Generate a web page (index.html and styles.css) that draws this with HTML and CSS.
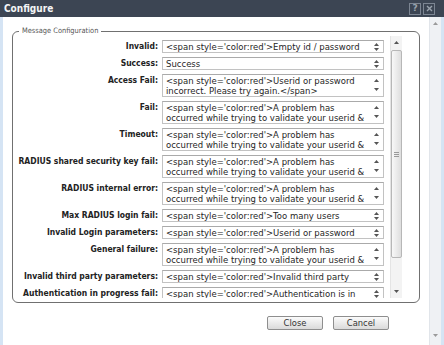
FILE: index.html
```html
<!DOCTYPE html>
<html>
<head>
<meta charset="utf-8">
<link rel="stylesheet" href="styles.css">
</head>
<body>
<div class="window">
  <div class="titlebar">
    <span class="title">Configure</span>
    <div class="tools">
      <span class="tool">?</span>
      <span class="tool"><svg width="7" height="7" viewBox="0 0 7 7"><path d="M1 1L6 6M6 1L1 6" stroke="#9aa3ad" stroke-width="1.4"/></svg></span>
    </div>
  </div>
  <div class="frame">
    <div class="content">
      <fieldset class="group">
        <legend>Message Configuration</legend>
        <div class="scroller">
          <div class="rows">
            <div class="lbl">Invalid:</div>
            <div class="field"><div class="txt">&lt;span style='color:red'&gt;Empty id / password</div><div class="spin"><svg class="ar" viewBox="0 0 5 3"><polygon points="0,3 2.5,0 5,3"/></svg><svg class="ar" viewBox="0 0 5 3"><polygon points="0,0 5,0 2.5,3"/></svg></div></div>

            <div class="lbl">Success:</div>
            <div class="field"><div class="txt">Success</div><div class="spin"><svg class="ar" viewBox="0 0 5 3"><polygon points="0,3 2.5,0 5,3"/></svg><svg class="ar" viewBox="0 0 5 3"><polygon points="0,0 5,0 2.5,3"/></svg></div></div>

            <div class="lbl">Access Fail:</div>
            <div class="field two"><div class="txt"><div>&lt;span style='color:red'&gt;Userid or password</div><div>incorrect. Please try again.&lt;/span&gt;</div></div><div class="spin"><svg class="ar" viewBox="0 0 5 3"><polygon points="0,3 2.5,0 5,3"/></svg><svg class="ar" viewBox="0 0 5 3"><polygon points="0,0 5,0 2.5,3"/></svg></div></div>

            <div class="lbl">Fail:</div>
            <div class="field two"><div class="txt"><div>&lt;span style='color:red'&gt;A problem has</div><div>occurred while trying to validate your userid &amp;</div></div><div class="spin"><svg class="ar" viewBox="0 0 5 3"><polygon points="0,3 2.5,0 5,3"/></svg><svg class="ar" viewBox="0 0 5 3"><polygon points="0,0 5,0 2.5,3"/></svg></div></div>

            <div class="lbl">Timeout:</div>
            <div class="field two"><div class="txt"><div>&lt;span style='color:red'&gt;A problem has</div><div>occurred while trying to validate your userid &amp;</div></div><div class="spin"><svg class="ar" viewBox="0 0 5 3"><polygon points="0,3 2.5,0 5,3"/></svg><svg class="ar" viewBox="0 0 5 3"><polygon points="0,0 5,0 2.5,3"/></svg></div></div>

            <div class="lbl">RADIUS shared security key fail:</div>
            <div class="field two"><div class="txt"><div>&lt;span style='color:red'&gt;A problem has</div><div>occurred while trying to validate your userid &amp;</div></div><div class="spin"><svg class="ar" viewBox="0 0 5 3"><polygon points="0,3 2.5,0 5,3"/></svg><svg class="ar" viewBox="0 0 5 3"><polygon points="0,0 5,0 2.5,3"/></svg></div></div>

            <div class="lbl">RADIUS internal error:</div>
            <div class="field two"><div class="txt"><div>&lt;span style='color:red'&gt;A problem has</div><div>occurred while trying to validate your userid &amp;</div></div><div class="spin"><svg class="ar" viewBox="0 0 5 3"><polygon points="0,3 2.5,0 5,3"/></svg><svg class="ar" viewBox="0 0 5 3"><polygon points="0,0 5,0 2.5,3"/></svg></div></div>

            <div class="lbl">Max RADIUS login fail:</div>
            <div class="field"><div class="txt">&lt;span style='color:red'&gt;Too many users</div><div class="spin"><svg class="ar" viewBox="0 0 5 3"><polygon points="0,3 2.5,0 5,3"/></svg><svg class="ar" viewBox="0 0 5 3"><polygon points="0,0 5,0 2.5,3"/></svg></div></div>

            <div class="lbl">Invalid Login parameters:</div>
            <div class="field"><div class="txt">&lt;span style='color:red'&gt;Userid or password</div><div class="spin"><svg class="ar" viewBox="0 0 5 3"><polygon points="0,3 2.5,0 5,3"/></svg><svg class="ar" viewBox="0 0 5 3"><polygon points="0,0 5,0 2.5,3"/></svg></div></div>

            <div class="lbl">General failure:</div>
            <div class="field two"><div class="txt"><div>&lt;span style='color:red'&gt;A problem has</div><div>occurred while trying to validate your userid &amp;</div></div><div class="spin"><svg class="ar" viewBox="0 0 5 3"><polygon points="0,3 2.5,0 5,3"/></svg><svg class="ar" viewBox="0 0 5 3"><polygon points="0,0 5,0 2.5,3"/></svg></div></div>

            <div class="lbl">Invalid third party parameters:</div>
            <div class="field"><div class="txt">&lt;span style='color:red'&gt;Invalid third party</div><div class="spin"><svg class="ar" viewBox="0 0 5 3"><polygon points="0,3 2.5,0 5,3"/></svg><svg class="ar" viewBox="0 0 5 3"><polygon points="0,0 5,0 2.5,3"/></svg></div></div>

            <div class="lbl">Authentication in progress fail:</div>
            <div class="field"><div class="txt">&lt;span style='color:red'&gt;Authentication is in</div><div class="spin"><svg class="ar" viewBox="0 0 5 3"><polygon points="0,3 2.5,0 5,3"/></svg><svg class="ar" viewBox="0 0 5 3"><polygon points="0,0 5,0 2.5,3"/></svg></div></div>
          </div>
          <div class="vbar">
            <div class="vbtn"><svg class="ar" viewBox="0 0 5 3"><polygon points="0,3 2.5,0 5,3"/></svg></div>
            <div class="thumb"><svg width="5" height="5" viewBox="0 0 5 5"><path d="M0 0.5H5M0 2.5H5M0 4.5H5" stroke="#9a9a9a" stroke-width="1"/></svg></div>
            <div class="track"></div>
            <div class="vbtn"><svg class="ar" viewBox="0 0 5 3"><polygon points="0,0 5,0 2.5,3"/></svg></div>
          </div>
        </div>
      </fieldset>
      <div class="buttons">
        <button class="btn">Close</button>
        <button class="btn">Cancel</button>
      </div>
    </div>
    <div class="outer-bar">
      <svg class="ar light" viewBox="0 0 5 3"><polygon points="0,3 2.5,0 5,3"/></svg>
      <svg class="ar light" viewBox="0 0 5 3"><polygon points="0,0 5,0 2.5,3"/></svg>
    </div>
  </div>
</div>
</body>
</html>
```

FILE: styles.css
```css
html, body {
  margin: 0;
  padding: 0;
}
body {
  width: 444px;
  height: 345px;
  overflow: hidden;
  background: #d5e4f4;
}
.window {
  width: 444px;
  height: 345px;
  display: flex;
  flex-direction: column;
}
.titlebar {
  height: 17px;
  flex: none;
  background: #3c4553;
  display: flex;
  align-items: center;
  justify-content: space-between;
  padding: 0 9px 0 4px;
}
.title {
  font-family: "DejaVu Sans Condensed", "DejaVu Sans", sans-serif;
  font-stretch: condensed;
  font-weight: bold;
  font-size: 10px;
  color: #f4f5f6;
}
.tools {
  display: flex;
  gap: 2px;
}
.tool {
  width: 12px;
  height: 12px;
  box-sizing: border-box;
  border: 1px solid #7c8592;
  display: flex;
  align-items: center;
  justify-content: center;
  color: #9aa3ad;
  font: bold 9px/1 "DejaVu Sans", sans-serif;
}
.frame {
  flex: 1;
  min-height: 0;
  display: flex;
  padding: 0 3px;
  background: #d5e4f4;
}
.content {
  flex: 1;
  min-width: 0;
  background: #fff;
  display: flex;
  flex-direction: column;
}
.outer-bar {
  width: 12px;
  flex: none;
  box-sizing: border-box;
  background: #eff1f4;
  border-left: 1px solid #e1e5ea;
  display: flex;
  flex-direction: column;
  justify-content: space-between;
  align-items: center;
  padding: 5px 0 8px;
}
.group {
  margin: 10px 9px 0;
  padding: 1px 17px 4px 0;
  border: 1px solid #707070;
  border-radius: 6px;
  min-width: 0;
}
.group legend {
  margin-left: 6px;
  padding: 0 3px;
  font-family: "DejaVu Sans Condensed", "DejaVu Sans", sans-serif;
  font-stretch: condensed;
  font-size: 7.4px;
  line-height: 8px;
  color: #555;
}
.scroller {
  display: flex;
  gap: 6px;
  height: 262px;
}
.rows {
  width: 371px;
  display: grid;
  grid-template-columns: 145px 222px;
  column-gap: 4px;
  row-gap: 4px;
  align-content: start;
  padding-top: 4px;
  box-sizing: border-box;
  overflow: hidden;
}
.lbl {
  font-family: "DejaVu Sans Condensed", "DejaVu Sans", sans-serif;
  font-stretch: condensed;
  font-weight: bold;
  font-size: 8.5px;
  line-height: 10px;
  padding-top: 1px;
  text-align: right;
  color: #222;
  white-space: nowrap;
}
.field {
  display: flex;
  height: 13px;
  box-sizing: border-box;
  border: 1px solid #c2c2c2;
  border-top-color: #aaaaaa;
  background: #fff;
}
.field.two {
  height: 23px;
}
.txt {
  flex: 1;
  min-width: 0;
  overflow: hidden;
  padding: 1px 0 0 3px;
  font-family: "DejaVu Sans", sans-serif;
  font-size: 8.5px;
  line-height: 10px;
  color: #262626;
  white-space: nowrap;
}
.spin {
  width: 9px;
  flex: none;
  margin-right: 2px;
  display: flex;
  flex-direction: column;
  justify-content: center;
  align-items: center;
  gap: 2px;
}
.two .spin {
  justify-content: space-between;
  padding: 4px 0 5px;
}
.ar {
  width: 5px;
  height: 3px;
  fill: #555;
  display: block;
}
.ar.light {
  fill: #9a9a9a;
}
.vbar {
  width: 12px;
  flex: none;
  box-sizing: border-box;
  display: flex;
  flex-direction: column;
  background: #f3f3f3;
  border-left: 1px solid #e4e4e4;
}
.vbtn {
  height: 13px;
  flex: none;
  display: flex;
  align-items: center;
  justify-content: center;
}
.thumb {
  height: 208px;
  flex: none;
  margin: 1px 0 0;
  box-sizing: border-box;
  border: 1px solid #b7b7b7;
  border-radius: 2px;
  background: linear-gradient(to right, #f8f8f8, #dedede);
  display: flex;
  align-items: center;
  justify-content: center;
}
.track {
  flex: 1;
}
.buttons {
  display: flex;
  justify-content: flex-end;
  gap: 10px;
  padding: 13px 40px 0 0;
}
.btn {
  width: 56px;
  height: 14px;
  padding: 0;
  box-sizing: border-box;
  border: 1px solid #8e8e8e;
  border-radius: 2px;
  background: linear-gradient(#fbfbfb, #dadada);
  font-family: "DejaVu Sans", sans-serif;
  font-size: 8.4px;
  line-height: 12px;
  color: #333;
}
```
